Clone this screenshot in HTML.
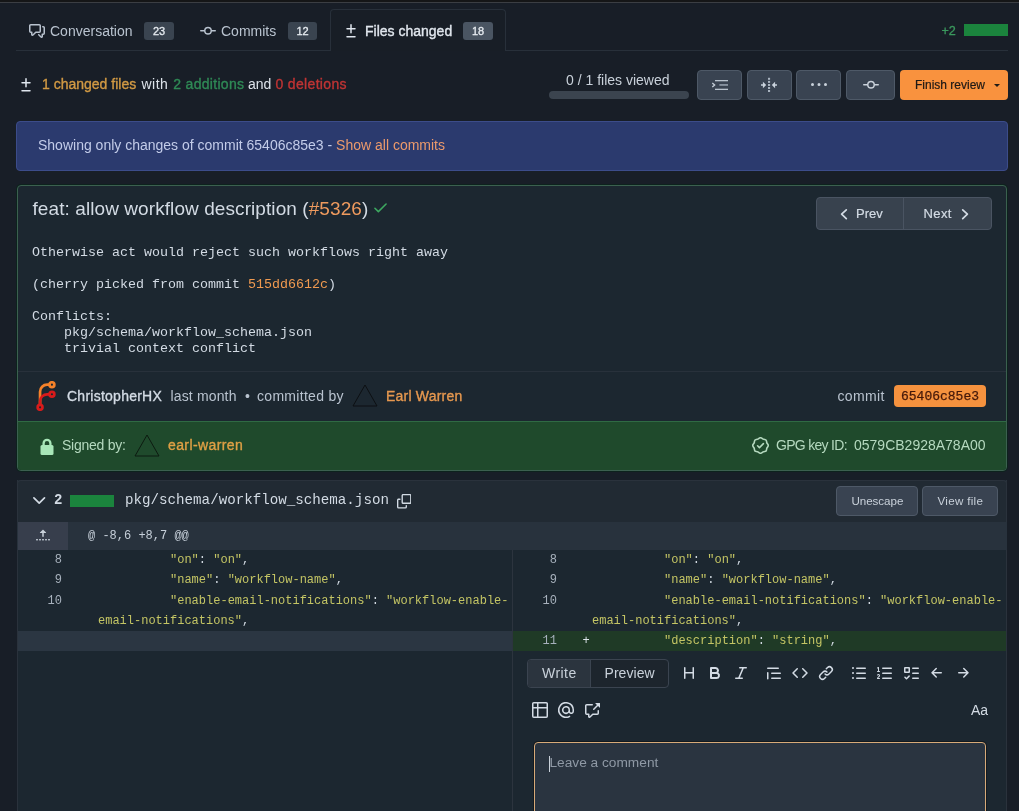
<!DOCTYPE html>
<html><head><meta charset="utf-8">
<style>
*{box-sizing:border-box;margin:0;padding:0}
html,body{width:1019px;height:811px;overflow:hidden;background:#181e27;font-family:"Liberation Sans",sans-serif;color:#c9d1da}
.a{position:absolute}
.t{position:absolute;white-space:pre;line-height:1}
.mono{font-family:"Liberation Mono",monospace}
svg{display:block}
.badge{position:absolute;background:#3a4450;color:#e6ebf0;border-radius:3px;font-size:11px;text-align:center;line-height:19px;height:18px;-webkit-text-stroke:0.3px currentColor}
.med{-webkit-text-stroke:0.35px currentColor}
.s{color:#c4c564}
.btn{position:absolute;background:#394351;border:1px solid #4e5967;border-radius:4px}
</style></head><body><div style="position:absolute;left:0;top:0;width:1019px;height:811px;will-change:transform">
<!-- top strip -->
<div class="a" style="left:0;top:0;width:1019px;height:2px;background:#151617"></div>
<div class="a" style="left:0;top:2px;width:1019px;height:1px;background:#3b3e43"></div>

<!-- tabs -->
<div class="a" style="left:16px;top:50px;width:992px;height:1px;background:#28303a"></div>
<div class="a" style="left:330px;top:9px;width:176px;height:42px;border:1px solid #28303a;border-bottom:none;border-radius:4px 4px 0 0;background:#181e26"></div>

<svg class="a" style="left:29px;top:23px" width="16" height="16" viewBox="0 0 16 16" fill="#b9c3cf"><path d="M1.75 1h8.5c.966 0 1.75.784 1.75 1.75v5.5A1.75 1.75 0 0 1 10.25 10H7.061l-2.574 2.573A1.458 1.458 0 0 1 2 11.543V10h-.25A1.75 1.75 0 0 1 0 8.250v-5.5C0 1.784.784 1 1.75 1ZM1.5 2.75v5.5c0 .138.112.25.25.25h1a.75.75 0 0 1 .75.75v2.19l2.72-2.72a.749.749 0 0 1 .53-.22h3.5a.25.25 0 0 0 .25-.25v-5.5a.25.25 0 0 0-.25-.25h-8.5a.25.25 0 0 0-.25.25Zm13 2a.25.25 0 0 0-.25-.25h-.5a.75.75 0 0 1 0-1.5h.5c.966 0 1.75.784 1.75 1.75v5.5A1.75 1.75 0 0 1 14.250 12H14v1.543a1.458 1.458 0 0 1-2.487 1.03L9.22 12.28a.749.749 0 0 1 .326-1.275.749.749 0 0 1 .734.215l2.22 2.22v-2.19a.75.75 0 0 1 .75-.75h1a.25.25 0 0 0 .25-.25Z"/></svg>
<div class="t" style="left:50px;top:24px;font-size:14px;color:#b9c3cf">Conversation</div>
<div class="badge" style="left:144px;top:22px;width:30px">23</div>

<svg class="a" style="left:200px;top:23px" width="16" height="16" viewBox="0 0 16 16" fill="#b9c3cf"><path d="M11.93 8.5a4.002 4.002 0 0 1-7.86 0H.75a.75.75 0 0 1 0-1.5h3.32a4.002 4.002 0 0 1 7.86 0h3.32a.75.75 0 0 1 0 1.5Zm-1.43-.75a2.5 2.5 0 1 0-5 0 2.5 2.5 0 0 0 5 0Z"/></svg>
<div class="t" style="left:221px;top:24px;font-size:14px;color:#b9c3cf">Commits</div>
<div class="badge" style="left:288px;top:22px;width:29px">12</div>

<svg class="a" style="left:343px;top:23px" width="16" height="16" viewBox="0 0 16 16" fill="#dfe6ee"><path d="M8.75 1.75V5H12a.75.75 0 0 1 0 1.5H8.75v3.25a.75.75 0 0 1-1.5 0V6.5H4A.75.75 0 0 1 4 5h3.25V1.75a.75.75 0 0 1 1.5 0ZM4 13h8a.75.75 0 0 1 0 1.5H4A.75.75 0 0 1 4 13Z"/></svg>
<div class="t med" style="left:365px;top:24px;font-size:14px;color:#e1e7ee">Files changed</div>
<div class="badge" style="left:463px;top:22px;width:30px;background:#4a5562">18</div>

<div class="t med" style="left:941.5px;top:25px;font-size:12.6px;color:#3b9a5e;-webkit-text-stroke:0.3px #3b9a5e">+2</div>
<div class="a" style="left:964px;top:24px;width:44px;height:12px;background:#1b843d"></div>

<!-- stats row -->
<svg class="a" style="left:18px;top:77px" width="16" height="16" viewBox="0 0 16 16" fill="#dfe6ee"><path d="M8.75 1.75V5H12a.75.75 0 0 1 0 1.5H8.75v3.25a.75.75 0 0 1-1.5 0V6.5H4A.75.75 0 0 1 4 5h3.25V1.75a.75.75 0 0 1 1.5 0ZM4 13h8a.75.75 0 0 1 0 1.5H4A.75.75 0 0 1 4 13Z"/></svg>
<div class="t med" style="left:42px;top:77px;font-size:14px;color:#d29a44">1 changed files</div>
<div class="t" style="left:141.5px;top:77px;font-size:14px;color:#dde3ea;letter-spacing:0.5px">with</div>
<div class="t med" style="left:173.3px;top:77px;font-size:14px;color:#2f8a56;letter-spacing:0.3px">2 additions</div>
<div class="t" style="left:248px;top:77px;font-size:14px;color:#dde3ea">and</div>
<div class="t med" style="left:275.4px;top:77px;font-size:14px;color:#c03434;letter-spacing:0.35px">0 deletions</div>

<div class="t" style="left:566px;top:73px;font-size:14px;color:#c9d1da">0 / 1 files viewed</div>
<div class="a" style="left:549px;top:91px;width:140px;height:8px;border-radius:4px;background:#3b444f"></div>

<div class="btn" style="left:697px;top:70px;width:45px;height:30px"></div>
<div class="btn" style="left:747px;top:70px;width:45px;height:30px"></div>
<div class="btn" style="left:796px;top:70px;width:45px;height:30px"></div>
<div class="btn" style="left:846px;top:70px;width:49px;height:30px"></div>
<div class="a" style="left:900px;top:70px;width:108px;height:30px;border-radius:4px;background:#f9923e"></div>
<div class="t med" style="left:915px;top:78.5px;font-size:12px;color:#1f1a16;-webkit-text-stroke:0.2px #1f1a16">Finish review</div>
<svg class="a" style="left:994px;top:84px" width="6" height="3" viewBox="0 0 6 3"><path d="M0 0h6L3 3Z" fill="#1f1a16"/></svg>

<!-- banner -->
<div class="a" style="left:16px;top:121px;width:992px;height:50px;border:1px solid #3c4c8a;border-radius:4px;background:#2b3a6e"></div>
<div class="t" style="left:38px;top:138px;font-size:14px;color:#c3cce9">Showing only changes of commit 65406c85e3 - <span style="color:#ec9a6c">Show all commits</span></div>

<!-- commit box -->
<div class="a" style="left:17px;top:185px;width:990px;height:286px;border:1px solid #3b604f;border-radius:4px;background:#1c2730;overflow:hidden;box-shadow:0 0 0 1px rgba(6,38,22,0.55)">
  <div class="a" style="left:0;top:185px;width:988px;height:1px;background:#28313b"></div>
  <div class="a" style="left:0;top:235px;width:988px;height:50px;background:#1f4a2c;border-top:1px solid #2f6a44"></div>
</div>
<div class="t" style="left:32.5px;top:199px;font-size:19px;color:#d3dbe4;letter-spacing:0.08px">feat: allow workflow description (<span style="color:#ee9a5e">#5326</span>)</div>
<svg class="a" style="left:371.5px;top:199px" width="17" height="17" viewBox="0 0 16 16" fill="#3da860"><path d="M13.780 4.22a.75.75 0 0 1 0 1.06l-7.25 7.25a.75.75 0 0 1-1.06 0L2.22 9.28a.751.751 0 0 1 .018-1.042.751.751 0 0 1 1.042-.018L6 10.94l6.72-6.72a.75.75 0 0 1 1.06 0Z"/></svg>

<div class="a" style="left:816px;top:197px;width:176px;height:33px;border:1px solid #4a5462;border-radius:4px;background:#38424e"></div>
<div class="a" style="left:903px;top:198px;width:1px;height:31px;background:#4a5462"></div>
<svg class="a" style="left:836px;top:205px" width="16" height="18" viewBox="0 0 16 18"><path d="M10.3 4.8L5.6 9.2l4.7 4.4" fill="none" stroke="#d3dbe4" stroke-width="1.7" stroke-linecap="round" stroke-linejoin="round"/></svg>
<div class="t med" style="left:856px;top:207px;font-size:13px;color:#d3dbe4;-webkit-text-stroke:0.2px #d3dbe4">Prev</div>
<div class="t med" style="left:923.5px;top:207px;font-size:13px;color:#d3dbe4;letter-spacing:0.4px;-webkit-text-stroke:0.2px #d3dbe4">Next</div>
<svg class="a" style="left:957px;top:205px" width="16" height="18" viewBox="0 0 16 18"><path d="M5.7 4.8l4.7 4.4-4.7 4.4" fill="none" stroke="#d3dbe4" stroke-width="1.7" stroke-linecap="round" stroke-linejoin="round"/></svg>

<pre class="a mono" style="left:32px;top:245px;font-size:13.33px;line-height:16px;color:#d3dbe4">Otherwise act would reject such workflows right away

(cherry picked from commit <span style="color:#f09a50">515dd6612c</span>)

Conflicts:
    pkg/schema/workflow_schema.json
    trivial context conflict</pre>

<svg class="a" style="left:31px;top:381px" width="30" height="30" viewBox="0 0 212 212"><g transform="translate(6,6)" fill="none" stroke-width="19"><path d="M58 168 v-98 a50 50 0 0 1 50-50 h18" stroke="#f5822a"/><path d="M58 168 v-30 a50 50 0 0 1 50-50 h18" stroke="#d81b1b"/><circle cx="142" cy="20" r="17" stroke="#f5822a"/><circle cx="142" cy="88" r="17" stroke="#d81b1b"/><circle cx="58" cy="180" r="17" stroke="#d81b1b"/></g></svg>
<div class="t med" style="left:67px;top:389px;font-size:14px;color:#d3dbe4;letter-spacing:0.25px">ChristopherHX</div>
<div class="t" style="left:170.5px;top:389px;font-size:14px;color:#b9c3cf;letter-spacing:0.15px">last month</div>
<div class="t" style="left:245px;top:389px;font-size:14px;color:#b9c3cf">•</div>
<div class="t" style="left:257px;top:389px;font-size:14px;color:#b9c3cf;letter-spacing:0.3px">committed by</div>
<svg class="a" style="left:352px;top:384px" width="26" height="23" viewBox="0 0 26 23"><path d="M13 1L1 22H25Z" fill="none" stroke="#0c0f12" stroke-width="1"/></svg>
<div class="t med" style="left:386px;top:389px;font-size:14px;color:#e6984f;letter-spacing:0.2px">Earl Warren</div>
<div class="t" style="left:837.5px;top:389px;font-size:14px;color:#b9c3cf;letter-spacing:0.35px">commit</div>
<div class="a mono" style="left:894px;top:385px;width:92px;height:22px;border-radius:4px;background:#f5923e;color:#45190a;font-size:13px;line-height:23px;text-align:center;-webkit-text-stroke:0.25px #45190a">65406c85e3</div>

<svg class="a" style="left:39px;top:437.5px" width="16" height="17" viewBox="0 0 16 17"><path d="M4.6 7.5V5.2a3.4 3.4 0 0 1 6.8 0v2.3" fill="none" stroke="#a8e6b8" stroke-width="2.3"/><rect x="1.5" y="7" width="13" height="10" rx="1.5" fill="#a8e6b8"/></svg>
<div class="t" style="left:62px;top:438px;font-size:14px;color:#b5d9bf;letter-spacing:-0.25px">Signed by:</div>
<svg class="a" style="left:134px;top:434px" width="26" height="23" viewBox="0 0 26 23"><path d="M13 1L1 22H25Z" fill="none" stroke="#0c1a10" stroke-width="1"/></svg>
<div class="t med" style="left:168px;top:438px;font-size:14px;color:#e0a045;letter-spacing:0.4px">earl-warren</div>
<svg class="a" style="left:752px;top:437px" width="17" height="17" viewBox="0 0 16 16" fill="#b5d9bf"><path d="m9.585.52.929.68c.153.112.331.186.518.215l1.138.175a2.678 2.678 0 0 1 2.24 2.24l.174 1.139c.029.187.103.365.215.518l.68.928a2.677 2.677 0 0 1 0 3.17l-.68.928a1.174 1.174 0 0 0-.215.518l-.175 1.138a2.678 2.678 0 0 1-2.241 2.241l-1.138.175a1.170 1.170 0 0 0-.518.215l-.928.68a2.677 2.677 0 0 1-3.170 0l-.928-.68a1.174 1.174 0 0 0-.518-.215L3.830 14.410a2.678 2.678 0 0 1-2.240-2.240l-.175-1.138a1.170 1.170 0 0 0-.215-.518l-.68-.928a2.677 2.677 0 0 1 0-3.170l.68-.928c.112-.153.186-.331.215-.518l.175-1.140a2.678 2.678 0 0 1 2.240-2.240l1.139-.175c.187-.029.365-.103.518-.215l.928-.68a2.677 2.677 0 0 1 3.170 0ZM7.303 1.728l-.927.68a2.670 2.670 0 0 1-1.180.489l-1.137.174a1.179 1.179 0 0 0-.987.987l-.174 1.136a2.677 2.677 0 0 1-.489 1.180l-.68.928a1.180 1.180 0 0 0 0 1.394l.68.927c.256.348.424.753.489 1.180l.174 1.137c.078.509.478.909.987.987l1.136.174a2.670 2.670 0 0 1 1.180.489l.928.68c.414.305.979.305 1.394 0l.927-.68a2.670 2.670 0 0 1 1.180-.489l1.137-.174a1.180 1.180 0 0 0 .987-.987l.174-1.136a2.670 2.670 0 0 1 .489-1.180l.68-.928a1.176 1.176 0 0 0 0-1.394l-.68-.927a2.686 2.686 0 0 1-.489-1.180l-.174-1.137a1.179 1.179 0 0 0-.987-.987l-1.136-.174a2.677 2.677 0 0 1-1.180-.489l-.928-.68a1.176 1.176 0 0 0-1.394 0ZM11.280 6.780l-3.750 3.750a.75.75 0 0 1-1.060 0L4.720 8.780a.751.751 0 0 1 .018-1.042.751.751 0 0 1 1.042-.018l1.220 1.220 3.220-3.220a.751.751 0 0 1 1.042.018.751.751 0 0 1 .018 1.042Z"/></svg>
<div class="t" style="left:776px;top:438px;font-size:14px;color:#b5d9bf;letter-spacing:-0.7px">GPG key ID:</div>
<div class="t" style="left:854px;top:438px;font-size:14px;color:#b5d9bf">0579CB2928A78A00</div>

<!-- diff file -->
<div class="a" style="left:17px;top:480px;width:990px;height:340px;background:#1c2730;border-left:1px solid #2a323c;border-right:1px solid #2a323c"></div>
<div class="a" style="left:17px;top:480px;width:990px;height:42px;background:#212a33;border:1px solid #2a323c;border-bottom:none;border-radius:4px 4px 0 0"></div>
<svg class="a" style="left:31px;top:492px" width="16" height="16" viewBox="0 0 16 16"><path d="M2.9 5.9l5.3 5.3 5.3-5.3" fill="none" stroke="#d3dbe4" stroke-width="1.7" stroke-linecap="round" stroke-linejoin="round"/></svg>
<div class="t mono" style="left:54px;top:493px;font-size:14px;font-weight:700;color:#d3dbe4">2</div>
<div class="a" style="left:70px;top:495px;width:44px;height:12px;background:#1b843d"></div>
<div class="t mono" style="left:125px;top:493px;font-size:14.2px;color:#d3dbe4">pkg/schema/workflow_schema.json</div>
<svg class="a" style="left:396.5px;top:494px" width="14.5" height="14.5" viewBox="0 0 16 16" fill="#d3dbe4"><path d="M0 6.75C0 5.784.784 5 1.75 5h1.5a.75.75 0 0 1 0 1.5h-1.5a.25.25 0 0 0-.25.25v7.5c0 .138.112.25.25.25h7.5a.25.25 0 0 0 .25-.25v-1.5a.75.75 0 0 1 1.5 0v1.5A1.75 1.75 0 0 1 9.25 16h-7.5A1.75 1.75 0 0 1 0 14.25Z M5 1.75C5 .784 5.784 0 6.75 0h7.5C15.216 0 16 .784 16 1.75v7.5A1.75 1.75 0 0 1 14.25 11h-7.5A1.75 1.75 0 0 1 5 9.25Zm1.75-.25a.25.25 0 0 0-.25.25v7.5c0 .138.112.25.25.25h7.5a.25.25 0 0 0 .25-.25v-7.5a.25.25 0 0 0-.25-.25Z"/></svg>
<div class="btn" style="left:836px;top:486px;width:82px;height:30px;"></div>
<div class="t" style="left:851.5px;top:495px;font-size:11.6px;color:#c9d1da;letter-spacing:-0.05px">Unescape</div>
<div class="btn" style="left:922px;top:486px;width:76px;height:30px;"></div>
<div class="t" style="left:937.5px;top:495px;font-size:11.6px;color:#c9d1da;letter-spacing:0.3px">View file</div>

<!-- hunk row -->
<div class="a" style="left:17px;top:522px;width:990px;height:28px;background:#28323d"></div>
<div class="a" style="left:18px;top:522px;width:50px;height:28px;background:#373e4c"></div>
<svg class="a" style="left:35px;top:528px" width="16" height="16" viewBox="0 0 16 16" fill="#c9d1da"><path d="M7.823 1.677 4.927 4.573A.25.25 0 0 0 5.104 5H7.25v3.236a.75.75 0 1 0 1.5 0V5h2.146a.25.25 0 0 0 .177-.427L8.177 1.677a.25.25 0 0 0-.354 0ZM13.75 11a.75.75 0 0 0 0 1.5h.5a.75.75 0 0 0 0-1.5h-.5Zm-3.75.75a.75.75 0 0 1 .75-.75h.5a.75.75 0 0 1 0 1.5h-.5a.75.75 0 0 1-.75-.75ZM7.75 11a.75.75 0 0 0 0 1.5h.5a.75.75 0 0 0 0-1.5h-.5ZM4 11.75a.75.75 0 0 1 .75-.75h.5a.75.75 0 0 1 0 1.5h-.5a.75.75 0 0 1-.75-.75ZM1.75 11a.75.75 0 0 0 0 1.5h.5a.75.75 0 0 0 0-1.5h-.5Z"/></svg>
<div class="t mono" style="left:88px;top:530px;font-size:12px;color:#c5ced8">@ -8,6 +8,7 @@</div>

<!-- code rows -->
<div class="a" style="left:512px;top:550px;width:1px;height:270px;background:#2c343e"></div>
<div class="a" style="left:18px;top:631px;width:494px;height:20px;background:#2b3642"></div>
<div class="a" style="left:513px;top:631px;width:493px;height:20px;background:#1f3a26"></div>
<div class="t mono" style="left:18px;top:554px;font-size:12px;color:#a7b1bc;width:44px;text-align:right">8</div>
<div class="t mono" style="left:98px;top:554px;font-size:12px;color:#d0d8e0">          <span class="s">"on"</span>: <span class="s">"on"</span>,</div>
<div class="t mono" style="left:18px;top:574px;font-size:12px;color:#a7b1bc;width:44px;text-align:right">9</div>
<div class="t mono" style="left:98px;top:574px;font-size:12px;color:#d0d8e0">          <span class="s">"name"</span>: <span class="s">"workflow-name"</span>,</div>
<div class="t mono" style="left:18px;top:595px;font-size:12px;color:#a7b1bc;width:44px;text-align:right">10</div>
<div class="t mono" style="left:98px;top:595px;font-size:12px;color:#d0d8e0">          <span class="s">"enable-email-notifications"</span>: <span class="s">"workflow-enable-</span></div>
<div class="t mono" style="left:98px;top:615px;font-size:12px;color:#d0d8e0"><span class="s">email-notifications"</span>,</div>
<div class="t mono" style="left:513px;top:554px;font-size:12px;color:#a7b1bc;width:44px;text-align:right">8</div>
<div class="t mono" style="left:592px;top:554px;font-size:12px;color:#d0d8e0">          <span class="s">"on"</span>: <span class="s">"on"</span>,</div>
<div class="t mono" style="left:513px;top:574px;font-size:12px;color:#a7b1bc;width:44px;text-align:right">9</div>
<div class="t mono" style="left:592px;top:574px;font-size:12px;color:#d0d8e0">          <span class="s">"name"</span>: <span class="s">"workflow-name"</span>,</div>
<div class="t mono" style="left:513px;top:595px;font-size:12px;color:#a7b1bc;width:44px;text-align:right">10</div>
<div class="t mono" style="left:592px;top:595px;font-size:12px;color:#d0d8e0">          <span class="s">"enable-email-notifications"</span>: <span class="s">"workflow-enable-</span></div>
<div class="t mono" style="left:592px;top:615px;font-size:12px;color:#d0d8e0"><span class="s">email-notifications"</span>,</div>
<div class="t mono" style="left:513px;top:635px;font-size:12px;color:#a7b1bc;width:44px;text-align:right">11</div>
<div class="t mono" style="left:592px;top:635px;font-size:12px;color:#d0d8e0">          <span class="s">"description"</span>: <span class="s">"string"</span>,</div>
<div class="t mono" style="left:582.5px;top:635px;font-size:12px;color:#dde4eb">+</div>

<!-- comment form -->
<div class="a" style="left:527px;top:659px;width:142px;height:29px;border:1px solid #3b4450;border-radius:4px;background:#1d252d"></div>
<div class="a" style="left:528px;top:660px;width:63px;height:27px;border-right:1px solid #3b4450;border-radius:3px 0 0 3px;background:#2b343e"></div>
<div class="t" style="left:542px;top:666px;font-size:14px;color:#c9d1da;letter-spacing:0.45px">Write</div>
<div class="t" style="left:604.5px;top:666px;font-size:14px;color:#c9d1da;letter-spacing:0.05px">Preview</div>
<svg class="a" style="left:681px;top:665px" width="16" height="16" viewBox="0 0 16 16" fill="#d3dbe4"><path d="M3.75 2a.75.75 0 0 1 .75.75V7h7V2.75a.75.75 0 0 1 1.5 0v10.5a.75.75 0 0 1-1.5 0V8.5h-7v4.75a.75.75 0 0 1-1.5 0V2.75A.75.75 0 0 1 3.75 2Z"/></svg>
<svg class="a" style="left:707px;top:665px" width="16" height="16" viewBox="0 0 16 16" fill="#d3dbe4"><path d="M4 2h4.5a3.501 3.501 0 0 1 2.852 5.53A3.499 3.499 0 0 1 9.5 14H4a1 1 0 0 1-1-1V3a1 1 0 0 1 1-1Zm1 7v3h4.5a1.5 1.5 0 0 0 0-3Zm3.5-2a1.5 1.5 0 0 0 0-3H5v3Z"/></svg>
<svg class="a" style="left:733px;top:665px" width="16" height="16" viewBox="0 0 16 16" fill="#d3dbe4"><path d="M6 2.75A.75.75 0 0 1 6.75 2h6.5a.75.75 0 0 1 0 1.5h-2.505l-3.858 9H9.25a.75.75 0 0 1 0 1.5h-6.5a.75.75 0 0 1 0-1.5h2.505l3.858-9H6.75A.75.75 0 0 1 6 2.75Z"/></svg>
<svg class="a" style="left:766px;top:665px" width="16" height="16" viewBox="0 0 16 16" fill="#d3dbe4"><path d="M1.75 2.5h10.5a.75.75 0 0 1 0 1.5H1.75a.75.75 0 0 1 0-1.5Zm4 5h8.5a.75.75 0 0 1 0 1.5h-8.5a.75.75 0 0 1 0-1.5Zm0 5h8.5a.75.75 0 0 1 0 1.5h-8.5a.75.75 0 0 1 0-1.5ZM2.5 7.75v6a.75.75 0 0 1-1.5 0v-6a.75.75 0 0 1 1.5 0Z"/></svg>
<svg class="a" style="left:792px;top:665px" width="16" height="16" viewBox="0 0 16 16" fill="#d3dbe4"><path d="m11.28 3.22 4.25 4.25a.75.75 0 0 1 0 1.06l-4.25 4.25a.749.749 0 0 1-1.275-.326.749.749 0 0 1 .215-.734L13.94 8l-3.72-3.72a.749.749 0 0 1 .326-1.275.749.749 0 0 1 .734.215Zm-6.56 0a.751.751 0 0 1 1.042.018.751.751 0 0 1 .018 1.042L2.06 8l3.72 3.72a.749.749 0 0 1-.326 1.275.749.749 0 0 1-.734-.215L.47 8.53a.75.75 0 0 1 0-1.06Z"/></svg>
<svg class="a" style="left:818px;top:665px" width="16" height="16" viewBox="0 0 16 16" fill="#d3dbe4"><path d="m7.775 3.275 1.25-1.25a3.5 3.5 0 1 1 4.95 4.95l-2.5 2.5a3.5 3.5 0 0 1-4.95 0 .751.751 0 0 1 .018-1.042.751.751 0 0 1 1.042-.018 1.998 1.998 0 0 0 2.83 0l2.5-2.5a2.002 2.002 0 0 0-2.83-2.83l-1.25 1.25a.751.751 0 0 1-1.042-.018.751.751 0 0 1-.018-1.042Zm-4.69 9.64a1.998 1.998 0 0 0 2.83 0l1.25-1.25a.751.751 0 0 1 1.042.018.751.751 0 0 1 .018 1.042l-1.25 1.25a3.5 3.5 0 1 1-4.95-4.95l2.5-2.5a3.5 3.5 0 0 1 4.95 0 .751.751 0 0 1-.018 1.042.751.751 0 0 1-1.042.018 1.998 1.998 0 0 0-2.83 0l-2.5 2.5a1.998 1.998 0 0 0 0 2.83Z"/></svg>
<svg class="a" style="left:851px;top:665px" width="16" height="16" viewBox="0 0 16 16" fill="#d3dbe4"><path d="M5.75 2.5h8.5a.75.75 0 0 1 0 1.5h-8.5a.75.75 0 0 1 0-1.5Zm0 5h8.5a.75.75 0 0 1 0 1.5h-8.5a.75.75 0 0 1 0-1.5Zm0 5h8.5a.75.75 0 0 1 0 1.5h-8.5a.75.75 0 0 1 0-1.5ZM2 14a1 1 0 1 1 0-2 1 1 0 0 1 0 2Zm1-6a1 1 0 1 1-2 0 1 1 0 0 1 2 0ZM2 4a1 1 0 1 1 0-2 1 1 0 0 1 0 2Z"/></svg>
<svg class="a" style="left:877px;top:665px" width="16" height="16" viewBox="0 0 16 16" fill="#d3dbe4"><path d="M5 3.25a.75.75 0 0 1 .75-.75h8.5a.75.75 0 0 1 0 1.5h-8.5A.75.75 0 0 1 5 3.25Zm0 5a.75.75 0 0 1 .75-.75h8.5a.75.75 0 0 1 0 1.5h-8.5A.75.75 0 0 1 5 8.25Zm0 5a.75.75 0 0 1 .75-.75h8.5a.75.75 0 0 1 0 1.5h-8.5a.75.75 0 0 1-.75-.75ZM.924 10.32a.5.5 0 0 1-.851-.525l.001-.001.001-.002.002-.004.007-.011c.097-.144.215-.273.348-.384.228-.19.588-.392 1.068-.392.468 0 .858.181 1.126.484.259.294.377.673.377 1.038 0 .987-.686 1.495-1.156 1.845l-.047.035c-.303.225-.522.4-.654.597h1.357a.5.5 0 0 1 0 1H.5a.5.5 0 0 1-.5-.5c0-1.005.692-1.52 1.167-1.875l.035-.025c.531-.396.8-.625.8-1.078a.57.57 0 0 0-.128-.376C1.806 10.068 1.695 10 1.5 10a.658.658 0 0 0-.429.163.835.835 0 0 0-.144.153ZM2.003 2.5V6h.503a.5.5 0 0 1 0 1H.5a.5.5 0 0 1 0-1h.503V3.308l-.28.14a.5.5 0 0 1-.446-.895l1.003-.5a.5.5 0 0 1 .723.447Z"/></svg>
<svg class="a" style="left:903px;top:665px" width="16" height="16" viewBox="0 0 16 16" fill="#d3dbe4"><path d="M2 2h4a1 1 0 0 1 1 1v4a1 1 0 0 1-1 1H2a1 1 0 0 1-1-1V3a1 1 0 0 1 1-1Zm4.655 8.595a.75.75 0 0 1 0 1.06L4.03 14.28a.75.75 0 0 1-1.06 0l-1.5-1.5a.749.749 0 0 1 .326-1.275.749.749 0 0 1 .734.215l.97.97 2.095-2.095a.75.75 0 0 1 1.06 0ZM9.75 2.5h5.5a.75.75 0 0 1 0 1.5h-5.5a.75.75 0 0 1 0-1.5Zm0 5h5.5a.75.75 0 0 1 0 1.5h-5.5a.75.75 0 0 1 0-1.5Zm0 5h5.5a.75.75 0 0 1 0 1.5h-5.5a.75.75 0 0 1 0-1.5Zm-7.25-9v3h3v-3Z"/></svg>
<svg class="a" style="left:929px;top:665px" width="16" height="16" viewBox="0 0 16 16" fill="#d3dbe4"><path d="M7.78 12.53a.75.75 0 0 1-1.06 0L2.47 8.28a.75.75 0 0 1 0-1.06l4.25-4.25a.751.751 0 0 1 1.042.018.751.751 0 0 1 .018 1.042L4.81 7h7.44a.75.75 0 0 1 0 1.5H4.81l2.97 2.97a.75.75 0 0 1 0 1.06Z"/></svg>
<svg class="a" style="left:955px;top:665px" width="16" height="16" viewBox="0 0 16 16" fill="#d3dbe4"><path d="M8.22 2.97a.75.75 0 0 1 1.06 0l4.25 4.25a.75.75 0 0 1 0 1.06l-4.25 4.25a.751.751 0 0 1-1.042-.018.751.751 0 0 1-.018-1.042l2.97-2.97H3.75a.75.75 0 0 1 0-1.5h7.44L8.22 4.03a.75.75 0 0 1 0-1.06Z"/></svg>
<svg class="a" style="left:532px;top:702px" width="16" height="16" viewBox="0 0 16 16" fill="#d3dbe4"><path d="M0 1.75C0 .784.784 0 1.75 0h12.5C15.216 0 16 .784 16 1.75v12.5A1.75 1.75 0 0 1 14.25 16H1.75A1.75 1.75 0 0 1 0 14.25ZM6.5 6.5v8h7.75a.25.25 0 0 0 .25-.25V6.5Zm8-1.5V1.75a.25.25 0 0 0-.25-.25H6.5V5Zm-13 1.5v7.75c0 .138.112.25.25.25H5v-8ZM5 5V1.5H1.75a.25.25 0 0 0-.25.25V5Z"/></svg>
<svg class="a" style="left:558px;top:702px" width="16" height="16" viewBox="0 0 16 16" fill="#d3dbe4"><path d="M4.75 2.37a6.501 6.501 0 0 0 6.5 11.26.75.75 0 0 1 .75 1.298A7.999 7.999 0 0 1 .989 4.148 8 8 0 0 1 16 7.75v1.5a2.75 2.75 0 0 1-5.072 1.475 3.999 3.999 0 0 1-6.65-4.19A4 4 0 0 1 12 8v1.25a1.25 1.25 0 0 0 2.5 0V7.867a6.5 6.5 0 0 0-9.75-5.496ZM10.5 8a2.5 2.5 0 1 0-5 0 2.5 2.5 0 0 0 5 0Z"/></svg>
<svg class="a" style="left:584px;top:702px" width="16" height="16" viewBox="0 0 16 16" fill="#d3dbe4"><path d="M2.75 3.5c-.138 0-.25.112-.25.25v7.5c0 .138.112.25.25.25h2a.75.75 0 0 1 .75.75v2.19l2.72-2.72a.749.749 0 0 1 .53-.22h4.5a.25.25 0 0 0 .25-.25v-2.5a.75.75 0 0 1 1.5 0v2.5A1.75 1.75 0 0 1 13.25 13H9.06l-2.573 2.573A1.458 1.458 0 0 1 4 14.543V13H2.75A1.75 1.75 0 0 1 1 11.25v-7.5C1 2.784 1.784 2 2.75 2h5.5a.75.75 0 0 1 0 1.5ZM16 1.25v4.146a.25.25 0 0 1-.427.177L14.03 4.03l-3.75 3.75a.749.749 0 0 1-1.275-.326.749.749 0 0 1 .215-.734l3.75-3.75-1.543-1.543A.25.25 0 0 1 11.604 1h4.146a.25.25 0 0 1 .25.25Z"/></svg>
<div class="t" style="left:971px;top:703px;font-size:14px;color:#d3dbe4">Aa</div>
<div class="a" style="left:534px;top:742px;width:452px;height:90px;border:1px solid #d8aa78;border-radius:4px;background:#2a3440;box-shadow:0 0 0 1px rgba(0,0,0,0.35)"></div>
<div class="a" style="left:549px;top:756px;width:1px;height:16px;background:#c9d1da"></div>
<div class="t" style="left:549.5px;top:756px;font-size:13.7px;color:#8f99a5">Leave a comment</div>
<svg class="a" style="left:710px;top:78px" width="20" height="14" viewBox="0 0 20 14"><path d="M2.3 5l2.3 2L2.3 9" fill="none" stroke="#c3ccd6" stroke-width="1.4"/><rect x="5" y="2" width="13" height="1.3" fill="#b9c3ce"/><rect x="9.4" y="6.2" width="8.6" height="1.5" fill="#9aa5b2"/><rect x="5" y="10.7" width="13" height="1.3" fill="#b9c3ce"/></svg>
<svg class="a" style="left:761px;top:77px" width="16" height="16" viewBox="0 0 16 16" fill="#c9d2dc"><path d="M0 7.2h2.4v1.6H0Z M1.9 4.8L5.2 8L1.9 11.2Z M16 7.2h-2.4v1.6H16Z M14.1 4.8L10.8 8L14.1 11.2Z"/><g fill="#aab4c0"><rect x="7" y="0.8" width="2.1" height="2"/><rect x="7" y="3.9" width="2.1" height="2"/><rect x="7" y="7" width="2.1" height="2"/><rect x="7" y="10" width="2.1" height="2"/><rect x="7" y="13" width="2.1" height="2"/></g></svg>
<svg class="a" style="left:811px;top:77px" width="16" height="16" viewBox="0 0 16 16" fill="#c9d1da"><path d="M8 9a1.5 1.5 0 1 0 0-3 1.5 1.5 0 0 0 0 3ZM1.5 9a1.5 1.5 0 1 0 0-3 1.5 1.5 0 0 0 0 3Zm13 0a1.5 1.5 0 1 0 0-3 1.5 1.5 0 0 0 0 3Z"/></svg>
<svg class="a" style="left:863px;top:77px" width="16" height="16" viewBox="0 0 16 16" fill="#c9d1da"><path d="M11.93 8.5a4.002 4.002 0 0 1-7.86 0H.75a.75.75 0 0 1 0-1.5h3.32a4.002 4.002 0 0 1 7.86 0h3.32a.75.75 0 0 1 0 1.5Zm-1.43-.75a2.5 2.5 0 1 0-5 0 2.5 2.5 0 0 0 5 0Z"/></svg>
</div></body></html>
